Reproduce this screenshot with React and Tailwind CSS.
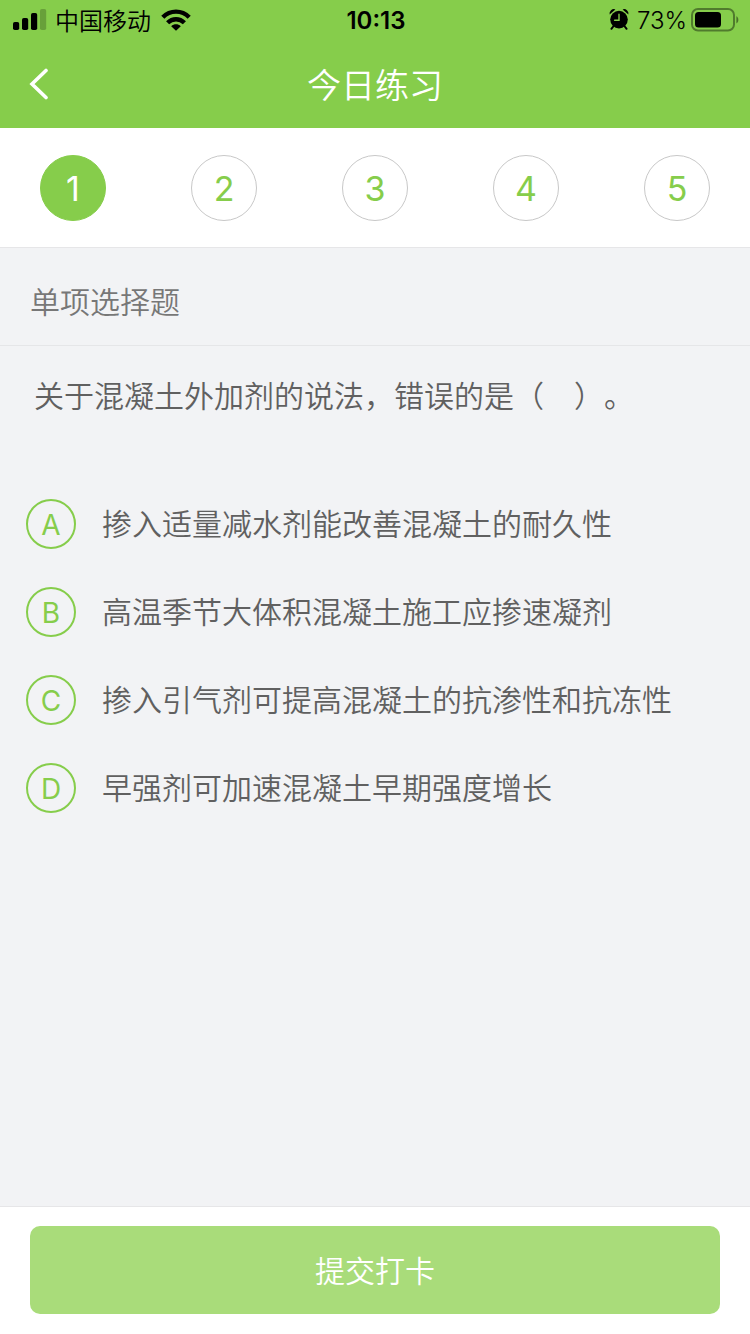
import { useState } from "react";

const steps = [1, 2, 3, 4, 5];

const options = [
  { key: "A", text: "掺入适量减水剂能改善混凝土的耐久性" },
  { key: "B", text: "高温季节大体积混凝土施工应掺速凝剂" },
  { key: "C", text: "掺入引气剂可提高混凝土的抗渗性和抗冻性" },
  { key: "D", text: "早强剂可加速混凝土早期强度增长" },
];

function SignalIcon() {
  return (
    <svg className="h-6 w-[34px]" viewBox="0 0 34 24" aria-hidden="true">
      <rect x="0" y="14" width="6.2" height="8" rx="1.8" />
      <rect x="9" y="10" width="6.2" height="12" rx="1.8" />
      <rect x="18" y="5" width="6.2" height="17" rx="1.8" />
      <rect x="27" y="1" width="6.2" height="21" rx="1.8" opacity="0.22" />
    </svg>
  );
}

function WifiIcon() {
  return (
    <svg className="h-6 w-[30px]" viewBox="0 0 30 24" aria-hidden="true">
      <g fill="none" stroke="#000" strokeWidth="4.4">
        <path d="M1.8 9.2C9.2 1.8 20.8 1.8 28.2 9.2" />
        <path d="M6.6 14.8C11.4 10 18.6 10 23.4 14.8" />
      </g>
      <path d="M15 22.8l-4.8-4.6c2.8-2.5 6.8-2.5 9.6 0z" />
    </svg>
  );
}

function AlarmIcon() {
  return (
    <svg className="h-6 w-5" viewBox="0 0 20 24" aria-hidden="true">
      <circle cx="10" cy="11.6" r="8.8" />
      <path d="M0.6 6.4A4.4 4.4 0 0 1 6.4 1.4zM19.4 6.4A4.4 4.4 0 0 0 13.6 1.4z" />
      <path d="M4.6 18L2.4 20.8M15.4 18l2.2 2.8" stroke="#000" strokeWidth="2" strokeLinecap="round" />
      <path d="M10 6.2v6H5.6" fill="none" stroke="#86cd4b" strokeWidth="1.4" strokeLinecap="round" />
    </svg>
  );
}

function BatteryIcon() {
  return (
    <svg className="h-6 w-12" viewBox="0 0 48 24" aria-hidden="true">
      <rect x="1" y="1" width="42" height="21.5" rx="6" fill="none" stroke="#000" strokeOpacity="0.4" strokeWidth="2" />
      <rect x="4" y="4" width="26" height="15.5" rx="3.5" />
      <path d="M45.4 8.2c2.6 1.2 2.6 6 0 7.2z" opacity="0.45" />
    </svg>
  );
}

function StatusBar() {
  return (
    <div className="grid h-10 grid-cols-[1fr_auto_1fr] items-center pr-[11px] pl-[13px] text-2xl text-black">
      <div className="flex items-center gap-2">
        <SignalIcon />
        <span className="mr-[2px] pt-1 font-[350]">中国移动</span>
        <WifiIcon />
      </div>
      <span className="pt-[2px] font-semibold">10:13</span>
      <div className="flex items-center justify-end gap-2">
        <AlarmIcon />
        <div className="flex items-center gap-1">
          <span className="pt-[2px] font-[350]">73%</span>
          <BatteryIcon />
        </div>
      </div>
    </div>
  );
}

export default function App() {
  const [step, setStep] = useState(1);
  const [answer, setAnswer] = useState("");

  return (
    <div className="flex min-h-screen flex-col bg-[#f2f3f5] font-['Inter','Noto_Sans_CJK_SC',sans-serif] [text-spacing-trim:space-all]">
      <header className="bg-[#86cd4b]">
        <StatusBar />
        <div className="grid h-[88px] grid-cols-[1fr_auto_1fr] items-center px-7 text-white">
          <button type="button" aria-label="返回" className="w-6">
            <svg className="h-8 w-6" viewBox="0 0 24 32" fill="none" stroke="currentColor" strokeWidth="3.6" strokeLinecap="round">
              <path d="M18 2.5L4 16l14 13.5" />
            </svg>
          </button>
          <h1 className="pt-1 text-[34px] leading-10 font-[350]">今日练习</h1>
        </div>
      </header>

      <nav className="flex justify-between border-b border-[#e6e6e8] bg-white px-10 pt-[27px] pb-[26px]">
        {steps.map((n) => (
          <button
            key={n}
            type="button"
            onClick={() => setStep(n)}
            className={`size-[66px] rounded-full border pt-[2px] text-[34px] leading-10 ${
              n === step ? "border-[#86cd4b] bg-[#86cd4b] text-white" : "border-[#c8c8c8] bg-white text-[#86cd4b]"
            }`}
          >
            {n}
          </button>
        ))}
      </nav>

      <h2 className="border-b border-[#e5e6e8] px-[30px] pt-[34px] pb-[23px] text-[30px] leading-10 font-[350] text-[#777]">
        单项选择题
      </h2>

      <main className="flex-1 pt-[30px] text-[30px] leading-10 font-[350] text-[#606060]">
        <p className="px-[34px]">关于混凝土外加剂的说法，错误的是（　）。</p>
        <div role="radiogroup" className="flex flex-col gap-[38px] px-[26px] pt-[83px] pb-10">
          {options.map((option) => (
            <label key={option.key} className="flex cursor-pointer items-center gap-[26px]">
              <input
                type="radio"
                name="answer"
                value={option.key}
                checked={answer === option.key}
                onChange={() => setAnswer(option.key)}
                className="peer sr-only"
              />
              <span className="flex size-[50px] shrink-0 items-center justify-center rounded-full border-2 border-[#86cd4b] pt-[2px] text-[28px] font-normal text-[#86cd4b] peer-checked:bg-[#86cd4b] peer-checked:text-white">
                {option.key}
              </span>
              <span>{option.text}</span>
            </label>
          ))}
        </div>
      </main>

      <footer className="border-t border-[#e6e6e8] bg-white px-[30px] pt-[19px] pb-5">
        <button type="button" className="h-[88px] w-full rounded-[10px] bg-[#a9dc7a] pt-[2px] text-[30px] leading-10 font-[350] text-white">
          提交打卡
        </button>
      </footer>
    </div>
  );
}
